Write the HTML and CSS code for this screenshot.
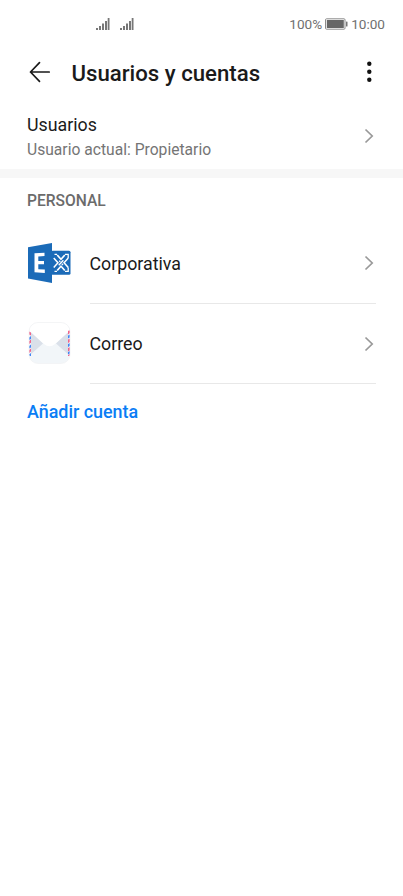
FILE: index.html
```html
<!DOCTYPE html>
<html lang="es">
<head>
    <meta charset="UTF-8">
    <meta name="viewport" content="width=device-width, initial-scale=1.0">
    <title>Usuarios y cuentas</title>
    <link rel="stylesheet" href="styles.css">
</head>
<body>
    <div class="status-bar">
        <div class="signals">
            <svg width="14" height="14" viewBox="0 0 14 14" fill="#777">
                <path d="M0 11h2v2H0zM3 9h2v4H3zM6 6.500h2V13H6zM9 4h2v9H9zM11.700 1h1.800v12h-1.800z"/>
            </svg>
            <svg width="14" height="14" viewBox="0 0 14 14" fill="#777">
                <path d="M0 11h2v2H0zM3 9h2v4H3zM6 6.500h2V13H6zM9 4h2v9H9zM11.700 1h1.800v12h-1.800z"/>
            </svg>
        </div>
        <div class="status-right">
            <span class="percent">100%</span>
            <svg class="battery" width="23" height="12" viewBox="0 0 23 12">
                <rect x="0.500" y="0.800" width="19.500" height="10.400" rx="1" fill="#fff" stroke="#8b8b8b"/>
                <rect x="1.800" y="2" width="17" height="8" fill="#666"/>
                <rect x="21" y="3.500" width="1.500" height="5" rx="0.500" fill="#777"/>
            </svg>
            <span class="clock">10:00</span>
        </div>
    </div>

    <header class="header">
        <svg class="back" width="22" height="22" viewBox="0 0 22 22" fill="none" stroke="#1a1a1a" stroke-width="1.700" stroke-linecap="round" stroke-linejoin="round">
            <path d="M10.500 1.700L1.500 11l9 9.300M1.500 11h18.700"/>
        </svg>
        <h1>Usuarios y cuentas</h1>
        <svg class="more" width="6" height="22" viewBox="0 0 6 22" fill="#111">
            <circle cx="3.300" cy="2.800" r="2.200"/>
            <circle cx="3.300" cy="10.800" r="2.200"/>
            <circle cx="3.300" cy="18.800" r="2.200"/>
        </svg>
    </header>

    <div class="users">
        <div class="users-text">
            <div class="title">Usuarios</div>
            <div class="subtitle">Usuario actual: Propietario</div>
        </div>
        <svg class="chevron" width="10" height="16" viewBox="0 0 10 16"><path d="M1.500 1.500L8.200 8l-6.700 6.500"/></svg>
    </div>

    <div class="separator"></div>

    <h2>PERSONAL</h2>
    <div class="account">
        <svg class="icon" width="44" height="42" viewBox="0 0 44 42">
            <rect x="23" y="8.700" width="19.500" height="24.100" rx="1.500" fill="#1b6bb8"/>
            <!-- crossed ribbons: white outline, blue core -->
            <path d="M27.500 14.500l11 12.500M38.500 14.500l-11 12.500" fill="none" stroke="#fff" stroke-width="6.200"/>
            <path d="M26.300 13.200l13.400 15.100M39.700 13.200L26.300 28.300" fill="none" stroke="#1b6bb8" stroke-width="3"/>
            <path d="M29 12.300h-2.500M37 12.300h3.200v3.700M29 29.300h-2.500M37 29.300h3.200v-3.700" fill="none" stroke="#fff" stroke-width="1.300"/>
            <path d="M30.700 23.300l4.700-5M31.200 18.700l1.100 1.200M33.800 21.700l1.200 1.300" fill="none" stroke="#fff" stroke-width="1.300"/>
            <path d="M0 5.300L24 1v40L0 36.500z" fill="#1b6bb8"/>
            <path d="M6.500 11.300l10-.6v3.400l-6.200.3v4.600h5.700v3.200h-5.700v5l6.500.3v3.400l-10.300-.6z" fill="#fff"/>
        </svg>
        <div class="account-body">
            <span>Corporativa</span>
            <svg class="chevron" width="10" height="16" viewBox="0 0 10 16"><path d="M1.500 1.500L8.200 8l-6.700 6.500"/></svg>
        </div>
    </div>
    <div class="account">
        <svg class="icon" width="44" height="42" viewBox="0 0 44 42">
            <defs>
                <clipPath id="card"><rect x="1" y="0.500" width="41" height="41" rx="9"/></clipPath>
            </defs>
            <g clip-path="url(#card)">
                <rect x="1" y="0" width="42" height="42" fill="#f2f6f9"/>
                <path d="M1 8l14 13.500L1 34zM42 8L28 21.500l14 12.500z" fill="#dae0e9"/>
                <path d="M1 9h2v25H1zM40 9h2v25h-2z" fill="#f7f9fc"/>
                <path d="M1 0h41v8.500L27 22q-5.500 4.500-11 0L1 8.500z" fill="#fff"/>
                <path d="M1 9.500l2 1v3l-2-1zM1 19l2-1.500v3.200L1 22zM1 28l2-1.500v3L1 31zM40 9l2-1v3l-2 1.500zM40 17.500l2-1v3.500l-2 1zM40 26l2-1v3.500l-2 1zM40 33l2-1v2h-2z" fill="#f0648a"/>
                <path d="M1 15.500l2-1.500v3L1 18zM1 24l2-1.500v3L1 26.500zM1 32.500l2-1.500v3H1zM40 13.500l2-1v3l-2 1zM40 22l2-1v3l-2 1zM40 30l2-1v2.500l-2 1z" fill="#4285f4"/>
            </g>
            <rect x="1" y="0.500" width="41" height="41" rx="9" fill="none" stroke="#f1f2f4" stroke-width="0.800"/>
        </svg>
        <div class="account-body">
            <span>Correo</span>
            <svg class="chevron" width="10" height="16" viewBox="0 0 10 16"><path d="M1.500 1.500L8.200 8l-6.700 6.500"/></svg>
        </div>
    </div>
    <a class="add-account">Añadir cuenta</a>
</body>
</html>
```

FILE: styles.css
```css
* {
    box-sizing: border-box;
}
body {
    margin: 0;
    min-height: 896px;
    background-color: #fff;
    color: #1a1a1a;
    font-family: Roboto, sans-serif;
}
svg {
    display: block;
    flex: none;
}
.status-bar {
    display: flex;
    justify-content: space-between;
    align-items: center;
    height: 48px;
    padding: 0 18px 0 96px;
}
.signals {
    display: flex;
    gap: 10px;
}
.status-right {
    display: flex;
    align-items: center;
    color: #707070;
    font-size: 13.6px;
    line-height: 20px;
}
.percent {
    margin-right: 3px;
}
.clock {
    margin-left: 3px;
}
.header {
    display: flex;
    align-items: center;
    height: 48px;
    padding: 0 31px 0 29px;
}
h1 {
    flex: 1;
    margin: 0 0 0 20.5px;
    padding-top: 1px;
    font-size: 22.2px;
    font-weight: 500;
    line-height: 30px;
}
.users {
    display: flex;
    justify-content: space-between;
    align-items: center;
    height: 73px;
    padding: 6px 29px 0 27px;
}
.users-text {
    padding-top: 2px;
}
.title {
    font-size: 17.8px;
    line-height: 25px;
}
.subtitle {
    color: #757575;
    font-size: 15.65px;
    line-height: 25px;
}
.chevron {
    fill: none;
    stroke: #999;
    stroke-width: 1.7;
}
.separator {
    height: 9px;
    background-color: #f7f7f7;
}
h2 {
    margin: 0;
    padding: 1px 0 0 27px;
    color: #6b6b6b;
    font-size: 15.6px;
    font-weight: 500;
    line-height: 44px;
}
.account {
    display: flex;
    align-items: center;
    padding: 0 27px 0 28px;
}
.icon {
    margin-bottom: 1px;
}
.account-body {
    flex: 1;
    display: flex;
    justify-content: space-between;
    align-items: center;
    height: 80.5px;
    margin-left: 17.5px;
    padding: 1px 2px 0 0;
    border-bottom: 1px solid #e8e8e8;
    font-size: 17.8px;
}
.add-account {
    display: block;
    padding: 15px 27px;
    color: #0a7df5;
    font-size: 17.9px;
    font-weight: 500;
    line-height: 25px;
}
```
